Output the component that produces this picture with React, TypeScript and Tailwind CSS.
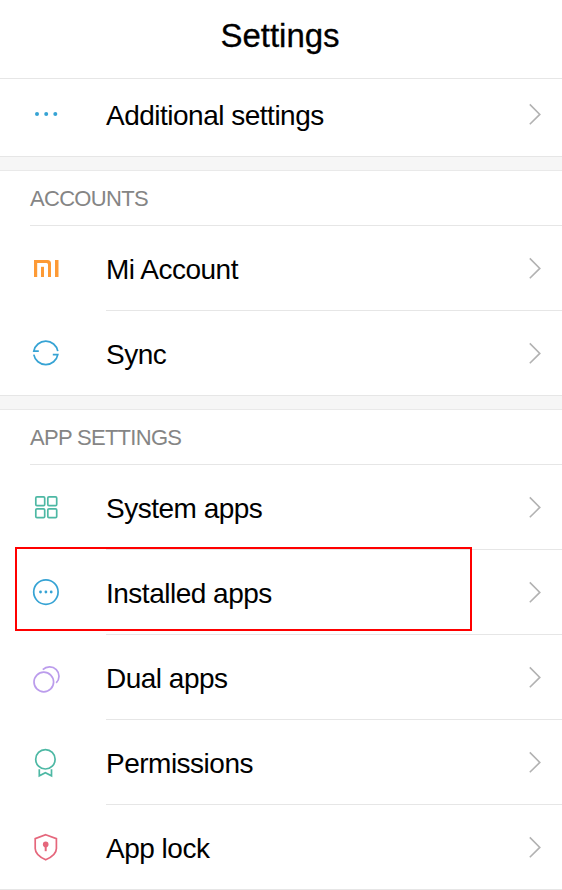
import type { ReactNode } from 'react';

const BLUE = '#36a3d4';
const GREEN = '#4db8a4';

function Icon({ color, children }: { color: string; children: ReactNode }) {
  return (
    <svg className="h-8 w-8 shrink-0" viewBox="0 0 32 32" fill="none" stroke={color} strokeWidth="1.7">
      {children}
    </svg>
  );
}

const icons = {
  more: (
    <Icon color={BLUE}>
      <g fill={BLUE} stroke="none">
        <circle cx="7" cy="16" r="2" />
        <circle cx="16.2" cy="16" r="2" />
        <circle cx="25.3" cy="16" r="2" />
      </g>
    </Icon>
  ),
  mi: (
    <Icon color="#fd9a35">
      <g fill="#fd9a35" stroke="none">
        <path d="M4 8H17.5Q21 8 21 11.5V25H18V12.5Q18 11 16.5 11H7.2V25H4Z" />
        <path d="M11 14.8H14V25H11Z" />
        <path d="M25 8H28.5V25H25Z" />
      </g>
    </Icon>
  ),
  sync: (
    <Icon color={BLUE}>
      <path d="M27.8 14.2A12.2 12.2 0 0 0 3.8 14.2H8.8" />
      <path d="M3.8 17.6A12.2 12.2 0 0 0 27.8 17.6H22.8" />
    </Icon>
  ),
  grid: (
    <Icon color={GREEN}>
      <rect x="5.8" y="5.8" width="8.9" height="8.9" rx="1.2" />
      <rect x="17.8" y="5.8" width="8.9" height="8.9" rx="1.2" />
      <rect x="5.8" y="17.8" width="8.9" height="8.9" rx="1.2" />
      <rect x="17.8" y="17.8" width="8.9" height="8.9" rx="1.2" />
    </Icon>
  ),
  installed: (
    <Icon color={BLUE}>
      <circle cx="15.9" cy="16.1" r="12.2" />
      <g fill={BLUE} stroke="none">
        <circle cx="10.5" cy="16" r="1.4" />
        <circle cx="15.9" cy="16" r="1.4" />
        <circle cx="21.2" cy="16" r="1.4" />
      </g>
    </Icon>
  ),
  dual: (
    <Icon color="#bb9cec">
      <circle cx="13.8" cy="21" r="9.8" />
      <path d="M12.8 8.7A9.4 9.4 0 0 1 19.7 5.9A9.3 9.3 0 0 1 29 15.2A9.3 9.3 0 0 1 26.2 21.8" />
    </Icon>
  ),
  permissions: (
    <Icon color={GREEN}>
      <circle cx="15.4" cy="13.3" r="9.7" />
      <path d="M9.3 23.3V29.8L15.4 26.8L21.5 29.8V23.3" />
    </Icon>
  ),
  lock: (
    <Icon color="#e5677c">
      <path d="M15.7 3.7L26.4 7.7V17.5C26.4 22.5 22 26 15.7 28.8C9.5 26 5.2 22.5 5.2 17.5V7.7Z" />
      <circle cx="15.7" cy="13.4" r="2.8" fill="#e5677c" stroke="none" />
      <path d="M15.7 14V20.2" strokeWidth="2" />
    </Icon>
  ),
};

function Chevron() {
  return (
    <svg className="ml-auto h-6 w-4 shrink-0" viewBox="0 0 16 24" fill="none" stroke="#b2b2b2" strokeWidth="1.6">
      <path d="M1.8 2.4L11.8 12.4L1.8 22.2" />
    </svg>
  );
}

interface RowProps {
  icon: ReactNode;
  label: string;
  first?: boolean;
  full?: boolean;
  marked?: boolean;
}

function Row({ icon, label, first, full, marked }: RowProps) {
  return (
    <div className={full ? 'relative border-b border-[#e6e6e6]' : 'relative'}>
      <div className={first ? 'flex h-[77px] items-center pr-[18px] pb-[7px] pl-[30px]' : 'flex h-[84px] items-center pr-[18px] pl-[30px]'}>
        {icon}
        <span className="ml-11 pt-[3px] text-[28px] leading-8 tracking-[-0.5px] whitespace-nowrap text-black">{label}</span>
        <Chevron />
      </div>
      {!full && <div className="ml-[106px] h-px bg-[#e6e6e6]" />}
      {marked && <div className="absolute -top-[3px] left-[15px] h-[84px] w-[457px] border-2 border-[#ff0000]" />}
    </div>
  );
}

function SectionTitle({ children }: { children: ReactNode }) {
  return (
    <>
      <div className="h-[14px] border-b border-[#e9e9e9] bg-[#f6f6f6]" />
      <h2 className="ml-[30px] flex h-[55px] items-center border-b border-[#e6e6e6] text-[22px] tracking-[-0.7px] text-[#858585]">
        {children}
      </h2>
    </>
  );
}

export default function App() {
  return (
    <main className="h-[890px] w-[562px] overflow-hidden bg-white font-['Liberation_Sans',Arial,sans-serif]">
      <header className="flex h-[79px] items-center justify-center border-b border-[#e6e6e6] pr-[2px] pb-[7px]">
        <h1 className="text-[33px] leading-10 text-black [-webkit-text-stroke:0.3px_black]">Settings</h1>
      </header>
      <Row icon={icons.more} label="Additional settings" first full />
      <SectionTitle>ACCOUNTS</SectionTitle>
      <Row icon={icons.mi} label="Mi Account" />
      <Row icon={icons.sync} label="Sync" full />
      <SectionTitle>APP SETTINGS</SectionTitle>
      <Row icon={icons.grid} label="System apps" />
      <Row icon={icons.installed} label="Installed apps" marked />
      <Row icon={icons.dual} label="Dual apps" />
      <Row icon={icons.permissions} label="Permissions" />
      <Row icon={icons.lock} label="App lock" full />
    </main>
  );
}
